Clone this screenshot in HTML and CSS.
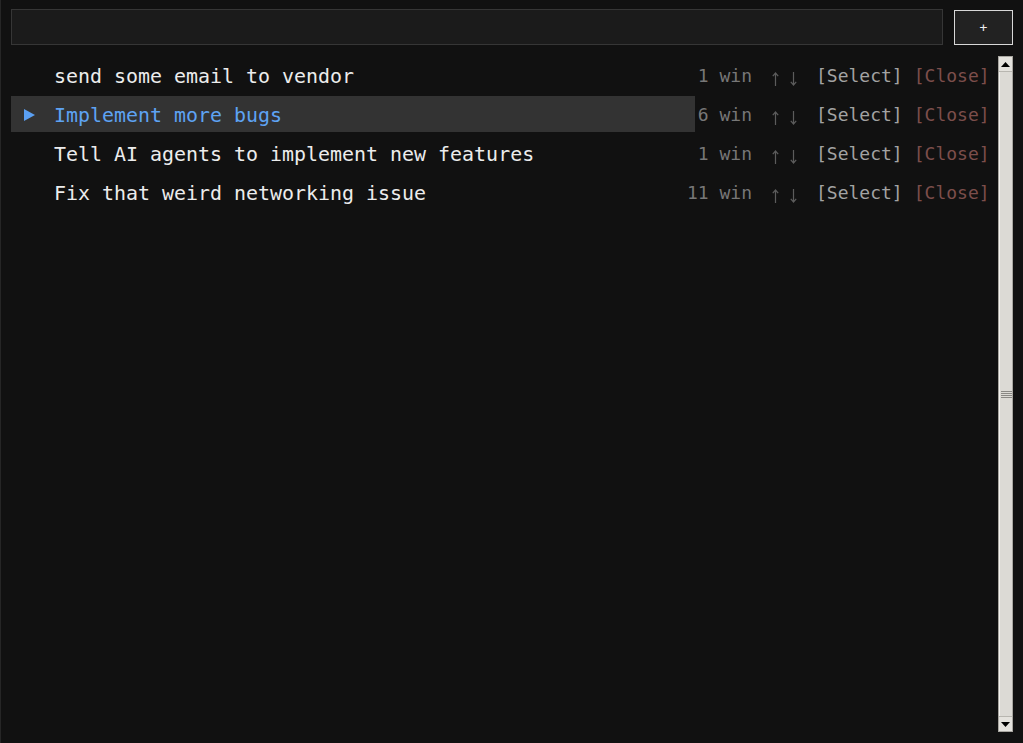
FILE: index.html
```html
<!DOCTYPE html>
<html lang="en">
<head>
<meta charset="utf-8">
<title>Tasks</title>
<link rel="stylesheet" href="styles.css">
</head>
<body>
<div class="app">
  <div class="toolbar">
    <input class="new-task" type="text" value="">
    <button class="add-btn">+</button>
  </div>
  <div class="list-area">
    <div class="rows">
      <div class="row">
        <div class="title"><span class="marker"></span><span class="name">send some email to vendor</span></div>
        <span class="count">1 win</span>
        <span class="arrows">
          <svg class="arr" width="11" height="16" viewBox="0 0 11 16"><path d="M5.5 15V2M2.8 5.2L5.5 2L8.2 5.2"/></svg>
          <svg class="arr" width="11" height="16" viewBox="0 0 11 16"><path d="M5.5 1V14M2.8 10.8L5.5 14L8.2 10.8"/></svg>
        </span>
        <span class="select">[Select]</span>
        <span class="close">[Close]</span>
      </div>
      <div class="row active">
        <div class="title"><span class="marker"><svg width="11" height="12" viewBox="0 0 11 12"><polygon points="0,0 11,6 0,12" fill="#5a9ff2"/></svg></span><span class="name">Implement more bugs</span></div>
        <span class="count">6 win</span>
        <span class="arrows">
          <svg class="arr" width="11" height="16" viewBox="0 0 11 16"><path d="M5.5 15V2M2.8 5.2L5.5 2L8.2 5.2"/></svg>
          <svg class="arr" width="11" height="16" viewBox="0 0 11 16"><path d="M5.5 1V14M2.8 10.8L5.5 14L8.2 10.8"/></svg>
        </span>
        <span class="select">[Select]</span>
        <span class="close">[Close]</span>
      </div>
      <div class="row">
        <div class="title"><span class="marker"></span><span class="name">Tell AI agents to implement new features</span></div>
        <span class="count">1 win</span>
        <span class="arrows">
          <svg class="arr" width="11" height="16" viewBox="0 0 11 16"><path d="M5.5 15V2M2.8 5.2L5.5 2L8.2 5.2"/></svg>
          <svg class="arr" width="11" height="16" viewBox="0 0 11 16"><path d="M5.5 1V14M2.8 10.8L5.5 14L8.2 10.8"/></svg>
        </span>
        <span class="select">[Select]</span>
        <span class="close">[Close]</span>
      </div>
      <div class="row">
        <div class="title"><span class="marker"></span><span class="name">Fix that weird networking issue</span></div>
        <span class="count">11 win</span>
        <span class="arrows">
          <svg class="arr" width="11" height="16" viewBox="0 0 11 16"><path d="M5.5 15V2M2.8 5.2L5.5 2L8.2 5.2"/></svg>
          <svg class="arr" width="11" height="16" viewBox="0 0 11 16"><path d="M5.5 1V14M2.8 10.8L5.5 14L8.2 10.8"/></svg>
        </span>
        <span class="select">[Select]</span>
        <span class="close">[Close]</span>
      </div>
    </div>
    <div class="scrollbar">
      <div class="sb-btn"><svg width="13" height="13" viewBox="0 0 13 13"><polygon points="2,9 11,9 6.5,4" fill="#000"/></svg></div>
      <div class="sb-thumb"><div class="grip"><i></i><i></i><i></i><i></i></div></div>
      <div class="sb-btn"><svg width="13" height="13" viewBox="0 0 13 13"><polygon points="2,4 11,4 6.5,9" fill="#000"/></svg></div>
    </div>
  </div>
</div>
</body>
</html>
```
FILE: styles.css
```css
html, body {
  margin: 0;
  height: 100%;
}
body {
  background: #111111;
  border-left: 1px solid #262626;
  box-sizing: border-box;
  font-family: "DejaVu Sans Mono", monospace;
  overflow: hidden;
}
.app {
  height: 100%;
  box-sizing: border-box;
  padding: 9px 10px 11px 10px;
  display: flex;
  flex-direction: column;
}
.toolbar {
  display: flex;
  align-items: center;
  gap: 11px;
  height: 36px;
}
.new-task {
  flex: 1;
  height: 36px;
  box-sizing: border-box;
  margin: 0;
  background: #1b1b1b;
  border: 1px solid #363636;
  color: #eee;
  font-family: "DejaVu Sans Mono", monospace;
  font-size: 16px;
  padding: 0 8px;
  outline: none;
}
.add-btn {
  width: 59px;
  height: 35px;
  box-sizing: border-box;
  margin: 0;
  background: #222222;
  border: 1px solid #d8d8d8;
  color: #eeeeee;
  font-family: "DejaVu Sans Mono", monospace;
  font-size: 13px;
  padding: 0;
}
.list-area {
  flex: 1;
  display: flex;
  margin-top: 11px;
  min-height: 0;
}
.rows {
  flex: 1;
  display: flex;
  flex-direction: column;
  gap: 3px;
  padding-top: 1px;
}
.row {
  display: flex;
  align-items: center;
  height: 36px;
  font-size: 18px;
  white-space: pre;
}
.title {
  width: 684px;
  height: 36px;
  display: flex;
  align-items: center;
  padding-left: 13px;
  padding-top: 2px;
  box-sizing: border-box;
  font-size: 19.95px;
  color: #ececec;
}
.marker {
  width: 11px;
  height: 12px;
  margin-right: 19px;
  display: flex;
}
.row.active .title {
  background: #333333;
  color: #5ea3f3;
}
.count {
  width: 66px;
  margin-left: -9px;
  text-align: right;
  color: #777777;
}
.arrows {
  display: flex;
  gap: 7px;
  margin-left: 18px;
  margin-top: 8px;
}
.arr {
  display: block;
  fill: none;
  stroke: #5c5c5c;
  stroke-width: 1.2;
}
.select {
  margin-left: 17px;
  color: #a3a3a3;
}
.close {
  margin-left: 11px;
  color: #7c4e4b;
}
.scrollbar {
  width: 15px;
  display: flex;
  flex-direction: column;
  background: #dcdad5;
  border: 1px solid #a8a6a0;
  box-sizing: border-box;
}
.sb-btn {
  height: 14px;
  display: flex;
  align-items: center;
  justify-content: center;
  background: #e4e2dd;
  border-bottom: 1px solid #b8b6b0;
}
.sb-btn:last-child {
  border-bottom: none;
  border-top: 1px solid #b8b6b0;
}
.sb-thumb {
  flex: 1;
  display: flex;
  align-items: center;
  justify-content: center;
  background: #dcdad5;
  border-left: 1px solid #f4f3f0;
}
.grip {
  display: flex;
  flex-direction: column;
  gap: 1px;
}
.grip i {
  display: block;
  width: 11px;
  height: 1px;
  background: #8a8884;
}
```
